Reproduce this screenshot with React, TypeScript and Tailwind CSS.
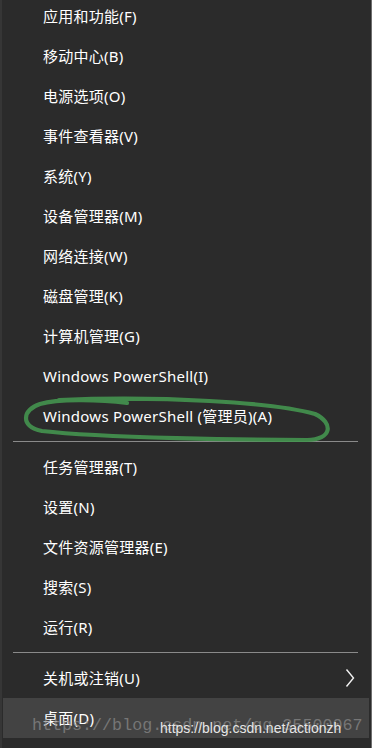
import React from "react";

const cjk = '"Segoe UI", "Noto Sans", "Noto Sans CJK SC", sans-serif';

function Row({ label, highlight, chevron }: { label: string; highlight?: boolean; chevron?: boolean }) {
  return (
    <div
      className={`h-[40px] flex items-center pl-[40px] pr-[12px] text-[15px] text-white justify-between tracking-[0.25px] ${highlight ? "bg-[#434343]" : ""}`}
      style={{ fontFamily: cjk }}
    >
      <span className="leading-none">{label}</span>
      {chevron && (
        <svg width="10" height="20" viewBox="0 0 10 20" className="mr-[2px]">
          <path d="M1.5 1.5 L8.5 10 L1.5 18.5" fill="none" stroke="#f2f2f2" strokeWidth="1.4" />
        </svg>
      )}
    </div>
  );
}

function Sep({ top, bottom }: { top: number; bottom: number }) {
  return (
    <div style={{ paddingTop: top, paddingBottom: bottom }} className="pl-[10px] pr-[11px]">
      <div className="h-px bg-[#8a8a8a]" />
    </div>
  );
}

export default function App() {
  const group1 = [
    "应用和功能(F)",
    "移动中心(B)",
    "电源选项(O)",
    "事件查看器(V)",
    "系统(Y)",
    "设备管理器(M)",
    "网络连接(W)",
    "磁盘管理(K)",
    "计算机管理(G)",
    "Windows PowerShell(I)",
    "Windows PowerShell (管理员)(A)",
  ];
  const group2 = ["任务管理器(T)", "设置(N)", "文件资源管理器(E)", "搜索(S)", "运行(R)"];
  return (
    <div className="relative w-[372px] h-[748px] overflow-hidden bg-[#2b2b2b] border-l-2 border-l-[#363636] border-r border-r-[#6e6e6e]">
      <div className="-mt-1 pl-[1px] pr-[2px]">
        {group1.map((l) => (
          <Row key={l} label={l} />
        ))}
        <Sep top={5} bottom={5} />
        {group2.map((l) => (
          <Row key={l} label={l} />
        ))}
        <Sep top={5} bottom={5} />
        <Row label="关机或注销(U)" chevron />
        <Row label="桌面(D)" highlight />
      </div>

      <svg className="absolute left-0 top-0 pointer-events-none" width="372" height="748" viewBox="0 0 372 748">
        <path
          d="M125 403 C95 399, 55 399, 38 404 C20 410, 18 426, 40 431 C100 438, 250 440, 305 440 C330 440, 332 423, 313 414 C270 402, 160 396, 57 400"
          fill="none"
          stroke="#44944f"
          strokeWidth="4.2"
          strokeLinecap="round"
          opacity="0.9"
        />
      </svg>

      <div
        className="absolute left-[30px] top-[718px] text-[16.7px] text-[#8c8c8c] opacity-70 whitespace-nowrap leading-none pointer-events-none"
        style={{ fontFamily: '"Liberation Mono", monospace' }}
      >
        https://blog.csdn.net/qq_35500067
      </div>
      <div
        className="absolute left-[158px] top-[721px] text-[14px] text-[#e6e6e6] whitespace-nowrap leading-none pointer-events-none"
        style={{ fontFamily: '"Liberation Sans", Arial, sans-serif' }}
      >
        https://blog.csdn.net/actionzh
      </div>
    </div>
  );
}
